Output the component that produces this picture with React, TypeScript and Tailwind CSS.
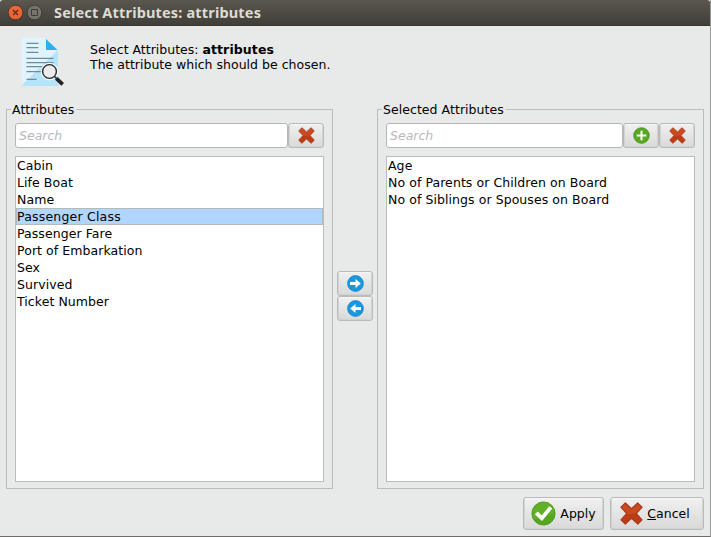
import React from "react";

const buttonFace =
  "flex items-center justify-center rounded-[3px] border border-[#b9bbbb] bg-linear-to-b from-[#f0f0f0] to-[#d9d9d9] shadow-[inset_0_1px_0_#f6f6f6,inset_0_0_0_1px_#d2d4d4]";

function Cross({ size }: { size: number }) {
  return (
    <svg width={size} height={size} viewBox="0 0 24 24">
      <path
        d="M5.600 1 12 7 18.400 1 23 5.500 17 12 23 18.700 18.600 23 12 17 5.500 23 1 18.700 7 12 1 5.500Z"
        fill="#cb4a20"
        stroke="#a73a1c"
        strokeWidth="1.200"
        strokeLinejoin="round"
      />
      <path d="M7.600 12.500 16.400 12 22.400 18.700 18.600 22.300 12 16.400 5.500 22.400 1.700 18.700Z" fill="#b23714" opacity="0.7" />
    </svg>
  );
}

function Plus() {
  return (
    <svg width="17" height="17" viewBox="0 0 17 17">
      <circle cx="8.500" cy="8.500" r="7.800" fill="#57a922" stroke="#468f1c" strokeWidth="0.8" />
      <path d="M8.500 3.700v9.600M3.700 8.500h9.600" stroke="#fff" strokeWidth="2" />
    </svg>
  );
}

function Arrow({ left = false }: { left?: boolean }) {
  return (
    <svg width="17" height="17" viewBox="0 0 17 17" className={left ? "-scale-x-100" : ""}>
      <circle cx="8.500" cy="8.500" r="7.900" fill="#1899df" stroke="#1685c6" strokeWidth="0.8" />
      <path d="M3 6.900h5.500V4l5.300 4.500-5.300 4.500v-2.900H3Z" fill="#fff" />
    </svg>
  );
}

function Check() {
  return (
    <svg width="25" height="25" viewBox="0 0 25 25">
      <circle cx="12.500" cy="12.500" r="11.600" fill="#62b026" stroke="#4c9a1d" strokeWidth="0.9" />
      <path d="M3 18.500A11.500 11.500 0 0 0 24 12.500Z" fill="#4f9f1d" opacity="0.55" />
      <path d="m3.800 13.200 3-2.800 3.900 4L18.300 5.200l3 2.400L11 20Z" fill="#fff" />
    </svg>
  );
}

function DocumentIcon() {
  return (
    <svg width="44" height="50" viewBox="0 0 44 50">
      <path d="M1 1h23l13 12v36H1Z" fill="#b5e4fa" />
      <path d="M1 1h23l13 12L1 48Z" fill="#e0f4fe" />
      <path d="M25 2v11h11.500Z" fill="#2bb0ec" />
      <path
        d="M5.500 6.300H17.500M5.500 10.700H17.500M5.500 15.300H17.500M5.500 21.300H32.500M5.500 25.700H32.500M5.500 29.700H23M5.500 34.700H21M5.500 42.300H15.500"
        stroke="#6f8b98"
        strokeWidth="1.200"
      />
      <circle cx="28.500" cy="34.500" r="8.200" fill="none" stroke="#f3fafd" strokeWidth="1.200" />
      <circle cx="28.500" cy="34.500" r="6.900" fill="#ebebeb" stroke="#292929" strokeWidth="1.400" />
      <path d="m33.500 39.500 2 2" stroke="#292929" strokeWidth="1.600" />
      <path d="m35.300 41.300 6.400 6" stroke="#222" strokeWidth="3.800" />
    </svg>
  );
}

function Panel({
  title,
  items,
  selected,
  withAdd = false,
}: {
  title: string;
  items: string[];
  selected?: string;
  withAdd?: boolean;
}) {
  return (
    <section className="flex h-[380px] w-[327px] flex-col border border-[#b9bdbb] px-2 pb-[6px]">
      <h2 className="-mt-2 ml-[-4px] h-[15px] self-start bg-[#e8eae9] pr-[2px] pl-px text-[12.500px] leading-[15px] tracking-[0.05px] whitespace-nowrap">
        {title}
      </h2>
      <div className="mt-[6px] flex h-[25px] w-[309px] shrink-0">
        <div className="flex-1 rounded-[3px] border border-[#b4b7b6] bg-white pl-[3px] text-[12.500px] leading-[23px] text-[#b9b9b9] italic">
          Search
        </div>
        {withAdd && (
          <button className={`${buttonFace} w-9 pb-px`}>
            <Plus />
          </button>
        )}
        <button className={`${buttonFace} w-9 pb-px`}>
          <Cross size={17} />
        </button>
      </div>
      <ul className="mt-2 w-[309px] flex-1 border border-[#b9bdbb] bg-white tracking-[0.07px]">
        {items.map((item) => (
          <li
            key={item}
            className={
              item === selected
                ? "h-[17px] border border-[#b4b9bd] bg-[#b0d6ff] leading-[15px] tracking-[0.2px] whitespace-nowrap"
                : "h-[17px] pl-px leading-[17px] whitespace-nowrap"
            }
          >
            {item}
          </li>
        ))}
      </ul>
    </section>
  );
}

export default function App() {
  return (
    <main className="flex h-[537px] w-[711px] flex-col overflow-hidden border-r border-b border-r-[#979797] border-b-[#706c6c] bg-[#e8eae9] font-['DejaVu_Sans',sans-serif] text-[12.500px] text-black">
      <header className="flex h-[26px] shrink-0 items-center rounded-t-[3px] border-b border-[#383732] bg-linear-to-b from-[#5b574e] to-[#3f3e39] pl-2">
        <svg width="35" height="18" viewBox="0 0 35 18">
          <circle cx="7.500" cy="8.500" r="7.300" fill="#ed6336" stroke="#36332e" strokeWidth="0.8" />
          <path d="m5 6 5 5m0-5-5 5" stroke="#5c2a19" strokeWidth="1.300" />
          <circle cx="26.500" cy="8.500" r="7.300" fill="#77746c" stroke="#34322d" strokeWidth="0.8" />
          <path d="M23.500 5.500h6v6h-6Z" fill="none" stroke="#3d3b36" strokeWidth="1" />
        </svg>
        <h1 className="ml-[11px] font-['Noto_Sans',sans-serif] text-[14.500px] font-bold tracking-[0.17px] whitespace-nowrap text-[#dfdbd2]">
          Select Attributes: attributes
        </h1>
      </header>
      <div className="flex h-[83px] shrink-0 pt-[11px] pl-[21px]">
        <DocumentIcon />
        <div className="mt-[5px] ml-[25px] leading-[15px] whitespace-nowrap">
          <p>
            Select Attributes: <b className="tracking-[0.1px]">attributes</b>
          </p>
          <p className="tracking-[0.02px]">The attribute which should be chosen.</p>
        </div>
      </div>
      <div className="flex pl-[6px]">
        <Panel
          title="Attributes"
          selected="Passenger Class"
          items={[
            "Cabin",
            "Life Boat",
            "Name",
            "Passenger Class",
            "Passenger Fare",
            "Port of Embarkation",
            "Sex",
            "Survived",
            "Ticket Number",
          ]}
        />
        <div className="flex w-11 flex-col items-center pt-[162px]">
          <button className={`${buttonFace} h-[25px] w-9 pb-px`}>
            <Arrow />
          </button>
          <button className={`${buttonFace} h-[25px] w-9 pb-px`}>
            <Arrow left />
          </button>
        </div>
        <Panel
          title="Selected Attributes"
          withAdd
          items={["Age", "No of Parents or Children on Board", "No of Siblings or Spouses on Board"]}
        />
      </div>
      <footer className="mt-2 flex justify-end gap-[6px] pr-[6px]">
        <button className={`${buttonFace} h-[33px] w-[81px] gap-1 pr-px`}>
          <Check />
          <span className="-mr-px pt-[2px]">Apply</span>
        </button>
        <button className={`${buttonFace} h-[33px] w-[94px] gap-1 pr-[4px]`}>
          <Cross size={23} />
          <span className="pt-[2px]">
            <span className="underline">C</span>ancel
          </span>
        </button>
      </footer>
    </main>
  );
}
